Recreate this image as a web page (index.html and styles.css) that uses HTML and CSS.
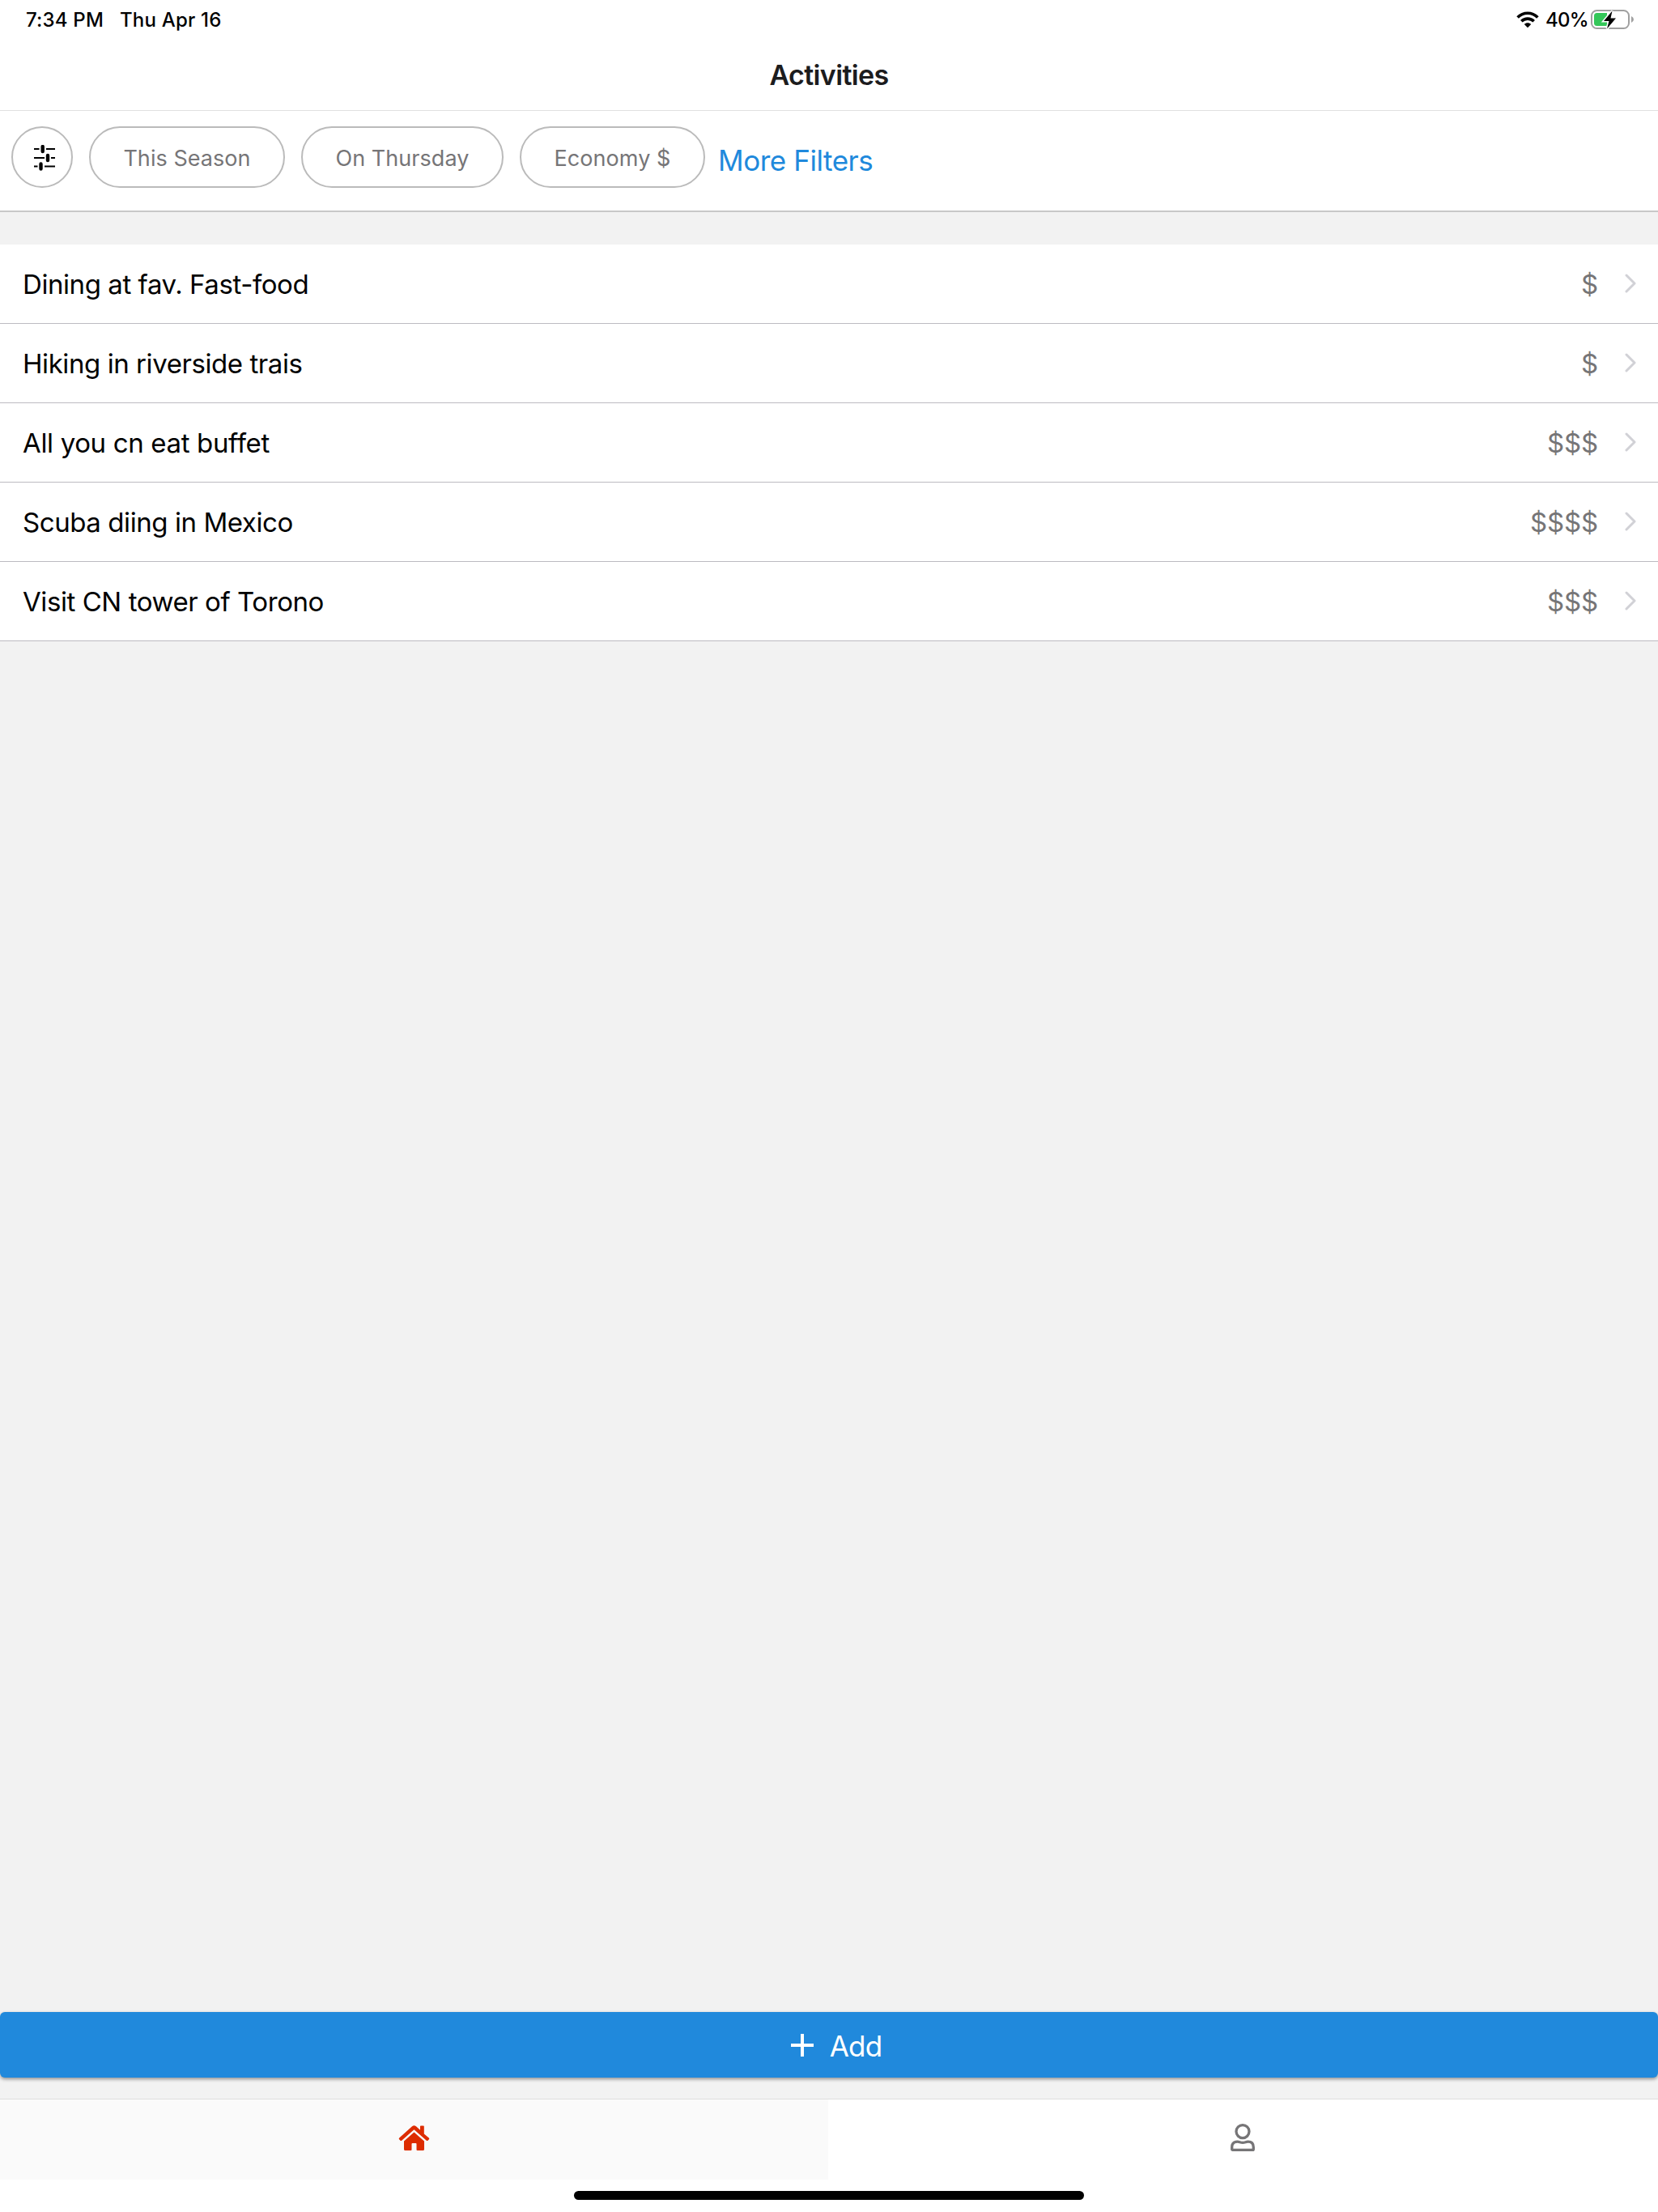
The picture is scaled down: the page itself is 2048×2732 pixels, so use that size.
FILE: index.html
```html
<!DOCTYPE html>
<html lang="en">
<head>
<meta charset="utf-8">
<title>Activities</title>
<link rel="stylesheet" href="styles.css">
</head>
<body>
<div class="screen">
  <div class="status">
    <span class="time">7:34 PM</span>
    <span class="date">Thu Apr 16</span>
    <svg class="wifi" width="28" height="21" viewBox="0 0 28 21" fill="none" stroke="#000" stroke-width="3.6">
      <path d="M1.600 7.600C8.500 .4 19.500 .4 26.400 7.600"/>
      <path d="M6.300 12.300C10.600 8 17.400 8 21.700 12.300"/>
      <path d="M14 20.300L9.800 15.900C12 13.800 16 13.800 18.200 15.900Z" fill="#000" stroke="none"/>
    </svg>
    <span class="percent">40%</span>
    <svg class="battery" width="54" height="26" viewBox="0 0 54 26">
      <rect x="1" y="1" width="46" height="22" rx="6.5" fill="#fff" stroke="#a0a0a0" stroke-width="2"/>
      <path d="M50 8Q53 9.300 53 12Q53 14.700 50 16Z" fill="#a0a0a0"/>
      <path d="M7.500 4H20V20H7.500Q4 20 4 16.500V7.500Q4 4 7.500 4Z" fill="#34c759"/>
      <path d="M26.500 1.500L16 14H22.500L20 23.500L31 10.500H24.500Z" fill="#000" stroke="#fff" stroke-width="3" paint-order="stroke"/>
    </svg>
  </div>
  <header class="header"><h1 class="title">Activities</h1></header>
  <div class="filters">
    <div class="chip round">
      <svg width="26" height="32" viewBox="0 0 26 32" fill="none" stroke="#000">
        <path d="M0 5H6.500M15 5H26M0 16H13M21 16H26M0 26.500H4.500M13 26.500H26" stroke-width="2.200"/>
        <path d="M10.700 2V8M17 13V19M8.500 23.500V29.500" stroke-width="4.400" stroke-linecap="round"/>
      </svg>
    </div>
    <div class="chip season">This Season</div>
    <div class="chip day">On Thursday</div>
    <div class="chip price">Economy $</div>
    <a class="more">More Filters</a>
  </div>
  <main class="content">
    <div class="row"><span class="name">Dining at fav. Fast-food</span><span class="cost">$</span><svg class="chev" viewBox="0 0 14 24"><path d="M2 2L12 12L2 22"/></svg></div>
    <div class="row"><span class="name">Hiking in riverside trais</span><span class="cost">$</span><svg class="chev" viewBox="0 0 14 24"><path d="M2 2L12 12L2 22"/></svg></div>
    <div class="row"><span class="name loose">All you cn eat buffet</span><span class="cost">$$$</span><svg class="chev" viewBox="0 0 14 24"><path d="M2 2L12 12L2 22"/></svg></div>
    <div class="row"><span class="name">Scuba diing in Mexico</span><span class="cost">$$$$</span><svg class="chev" viewBox="0 0 14 24"><path d="M2 2L12 12L2 22"/></svg></div>
    <div class="row"><span class="name">Visit CN tower of Torono</span><span class="cost">$$$</span><svg class="chev" viewBox="0 0 14 24"><path d="M2 2L12 12L2 22"/></svg></div>
  </main>
  <div class="action">
    <div class="add">
      <svg width="28" height="28" viewBox="0 0 28 28"><path d="M14 0V28M0 14H28" stroke="#fff" stroke-width="4"/></svg>
      <span class="add-label">Add</span>
    </div>
  </div>
  <nav class="tabs">
    <div class="tab active">
      <svg width="40" height="32" viewBox="0 0 40 32" fill="#dd2c00">
        <path d="M1.200 15.500L17 1.300Q19.500 -.7 22 1.300L27 5.800V1.200Q27 .4 27.800 .4H31Q31.800 .4 31.800 1.200V10.500L37.800 15.500Q38.600 16.300 37.900 17.200L36.500 18.700Q35.700 19.500 34.800 18.700L19.500 5.200L4.200 18.700Q3.300 19.500 2.500 18.700L1.100 17.200Q.4 16.300 1.200 15.500Z"/>
        <path d="M19.500 8.500L32 19.500V29.500Q32 31 30.500 31H23.500Q22.500 31 22.500 30V23Q22.500 22 21.500 22H17.500Q16.500 22 16.500 23V30Q16.500 31 15.500 31H8.500Q7 31 7 29.500V19.500Z"/>
      </svg>
    </div>
    <div class="tab profile">
      <svg width="32" height="36" viewBox="0 0 32 36" fill="none" stroke="#767577" stroke-width="3.3">
        <circle cx="16" cy="10.600" r="8"/>
        <path d="M2.700 32.500V30Q2.700 23.200 9.500 23.200C12 23.200 13 24.400 16 24.400S20 23.200 22.500 23.200Q29.300 23.200 29.300 30V32.500Q29.300 33.400 28.400 33.400H3.600Q2.700 33.400 2.700 32.500Z"/>
      </svg>
    </div>
  </nav>
  <footer class="home"><div class="indicator"></div></footer>
</div>
</body>
</html>
```

FILE: styles.css
```css
* { box-sizing: border-box; }
body { margin: 0; font-family: Inter, "Liberation Sans", sans-serif; }
svg { flex: none; display: block; }
.screen { width: 2048px; height: 2732px; display: flex; flex-direction: column; background: #fff; }
.status { height: 48px; display: flex; align-items: center; padding: 0 29px 0 32px; font-size: 24px; font-weight: 500; letter-spacing: .2px; white-space: nowrap; }
.time { width: 116px; }
.wifi { margin-left: auto; margin-right: 8px; }
.percent { width: 56px; letter-spacing: -.7px; }
.battery { margin-top: 2px; }
.header { height: 89px; display: flex; align-items: center; justify-content: center; border-bottom: 1px solid #e0e0e0; }
.title { margin: 0; font-size: 34px; font-weight: 600; letter-spacing: -.65px; color: #1c1c1e; }
.filters { height: 125px; display: flex; align-items: flex-start; padding: 19px 14px 0; border-bottom: 2px solid #c8c8c8; }
.chip { height: 76px; display: flex; align-items: center; justify-content: center; padding: 3px 0 0; border: 2px solid #bbb; border-radius: 38px; margin-right: 20px; font-size: 27px; letter-spacing: .05px; color: #767577; white-space: nowrap; }
.round { width: 76px; padding: 2px 0 0 6px; }
.season { width: 242px; }
.day { width: 250px; }
.price { width: 229px; margin-right: 16px; }
.more { font-size: 35px; line-height: 42px; letter-spacing: -.45px; margin-top: 21px; color: #2089dc; }
.content { flex: 1; padding-top: 40px; background: #f2f2f2; }
.row { height: 98px; display: flex; align-items: center; padding: 0 27px 0 28px; background: #fff; border-bottom: 1px solid #bcbbc1; font-size: 33px; }
.name { flex: 1; letter-spacing: -.43px; }
.loose { letter-spacing: -.35px; }
.cost { color: #767577; letter-spacing: -.2px; margin-right: 33px; }
.chev { width: 14px; height: 24px; margin-bottom: 2px; fill: none; stroke: #d1d1d6; stroke-width: 3; stroke-linecap: round; stroke-linejoin: round; }
.action { height: 107px; background: #f2f2f2; }
.add { height: 81px; display: flex; align-items: center; justify-content: center; gap: 20px; padding-left: 18px; background: #2089dc; border-radius: 6px; color: #fff; font-size: 35px; letter-spacing: -.8px; box-shadow: 0 2px 4px rgba(0, 0, 0, .4); }
.add-label { padding-top: 3px; }
.tabs { height: 100px; display: flex; border-top: 1px solid #dedede; background: #fff; }
.tab { flex: 1 1 0; display: flex; align-items: center; justify-content: center; padding-bottom: 4px; }
.active { background: #fafafa; }
.profile { padding: 0 2px 5px 0; }
.home { height: 40px; display: flex; justify-content: center; padding-top: 14px; }
.indicator { width: 630px; height: 11px; border-radius: 6px; background: #000; }
```
